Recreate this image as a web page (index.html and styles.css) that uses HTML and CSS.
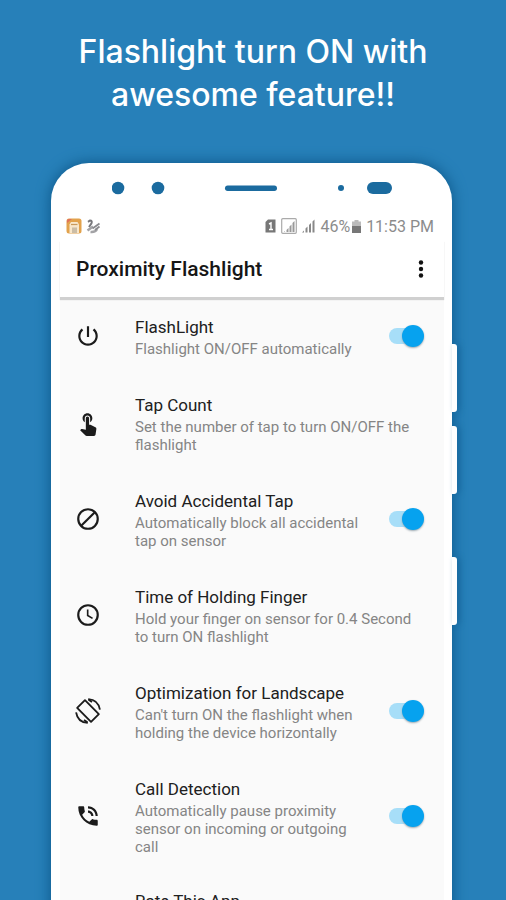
FILE: index.html
```html
<!DOCTYPE html>
<html lang="en">
<head>
<meta charset="utf-8">
<meta name="viewport" content="width=device-width, initial-scale=1">
<title>Proximity Flashlight</title>
<link rel="stylesheet" href="styles.css">
</head>
<body>
<h1 class="headline">Flashlight turn ON with<br>awesome feature!!</h1>
<main class="phone">
  <span class="key key-up"></span>
  <span class="key key-down"></span>
  <span class="key key-power"></span>
  <div class="sensors">
    <svg width="280" height="14" viewBox="0 0 280 14" fill="#1b6b9f" aria-hidden="true">
      <circle cx="6" cy="7" r="6.3"/><circle cx="46" cy="7" r="6.3"/>
      <rect x="113" y="4.500" width="52" height="5.500" rx="2.700"/>
      <circle cx="229" cy="7" r="3"/><rect x="255" y="1" width="25" height="12" rx="6"/>
    </svg>
  </div>
  <div class="screen">
    <div class="status">
      <svg width="16" height="16" viewBox="0 0 16 16" aria-hidden="true">
        <rect x=".5" y=".5" width="15" height="15" rx="2.500" fill="#e2a24c"/>
        <path d="M1 5V3q0-2 2-2h3z" fill="#e0705c"/>
        <path d="M3.500 15V6.500L5 4h6.500l1.500 2.500V15z" fill="#f8e7cb"/>
        <path d="M5 6.500h6.500" stroke="#c99a5c" stroke-width="1.200" fill="none"/>
        <path d="M6 9.500h5V15H6z" fill="#cbbda6"/>
      </svg>
      <svg width="15" height="15" viewBox="0 0 15 15" fill="none" stroke="#77777b" aria-hidden="true">
        <path d="M2 2.800L4 1.500q2.500 0 1.500 2.700L3 8" stroke-width="2"/>
        <path d="M1.500 11.500L7 7.500M4.500 13q5 .5 6.500-3" stroke-width="2.500" stroke="#a3a3a6"/>
        <path d="M6.500 9.500L13.500 4.500M9 11l4.500-3.500" stroke-width="1.800" stroke="#8a8a8e"/>
      </svg>
      <div class="status-right">
        <svg width="11" height="14" viewBox="0 0 11 14" aria-hidden="true"><path d="M3 .5h7.500v13H.5V3z" fill="#777"/><path d="M4 5l2-1v6.500M4 10.500h4" stroke="#fff" stroke-width="1.400" fill="none"/></svg>
        <svg width="16" height="16" viewBox="0 0 16 16" aria-hidden="true"><rect x=".7" y=".7" width="14.600" height="14.600" rx="1" fill="none" stroke="#aaa" stroke-width="1.200"/><path d="M3 14l1-1v1zM5.500 14v-2l2-2v4zM8.500 14V8.500l2-2V14zM11.500 14V5l2-2v11z" fill="#999"/></svg>
        <svg width="13" height="14" viewBox="0 0 13 14" fill="#888" aria-hidden="true"><path d="M0 13.500l2-2v2zM3.500 13.500v-4l2-2v6zM7 13.500V6l2-2v9.500zM10.500 13.500v-11l2-2v13z"/></svg>
        <span class="battery">46%<svg width="9" height="13" viewBox="0 0 9 13" aria-hidden="true"><path d="M2.500 0h4v1.500H9V6H0V1.500h2.500z" fill="#bbb"/><path d="M0 6h9v7H0z" fill="#777"/></svg></span>
        <span>11:53 PM</span>
      </div>
    </div>
    <header class="appbar">
      <h2 class="title">Proximity Flashlight</h2>
      <button class="more" type="button" aria-label="More options">
        <svg width="6" height="18" viewBox="0 0 6 18" fill="#111"><circle cx="3" cy="2.500" r="2.200"/><circle cx="3" cy="9" r="2.200"/><circle cx="3" cy="15.500" r="2.200"/></svg>
      </button>
    </header>
    <ul class="settings">
      <li class="row">
        <svg class="icon" viewBox="0 0 24 24" aria-hidden="true"><path d="M13 3h-2v10h2V3zm4.830 2.170l-1.420 1.420C17.990 7.860 19 9.810 19 12c0 3.870-3.130 7-7 7s-7-3.130-7-7c0-2.190 1.010-4.140 2.580-5.420L6.170 5.170C4.230 6.820 3 9.260 3 12c0 4.970 4.030 9 9 9s9-4.030 9-9c0-2.740-1.230-5.180-3.170-6.830z"/></svg>
        <label class="text" for="flash"><span class="name">FlashLight</span><span class="desc">Flashlight ON/OFF automatically</span></label>
        <input class="switch" id="flash" type="checkbox" role="switch" checked>
      </li>
      <li class="row">
        <svg class="icon" viewBox="0 0 24 24" aria-hidden="true"><path d="M9 11.240V7.500C9 6.120 10.120 5 11.500 5S14 6.120 14 7.500v3.740c1.210-.81 2-2.180 2-3.740C16 5.010 13.990 3 11.500 3S7 5.010 7 7.500c0 1.560.79 2.930 2 3.740zm9.840 4.630l-4.540-2.260c-.17-.07-.35-.11-.54-.11H13v-6c0-.83-.67-1.500-1.500-1.500S10 6.670 10 7.500v10.740l-3.430-.72c-.08-.01-.15-.03-.24-.03-.31 0-.59.13-.79.33l-.79.800 4.940 4.940c.27.270.65.440 1.060.440h6.790c.75 0 1.330-.55 1.440-1.280l.75-5.270c.01-.07.02-.14.020-.2 0-.62-.38-1.160-.91-1.380z"/></svg>
        <div class="text"><span class="name">Tap Count</span><span class="desc">Set the number of tap to turn ON/OFF the flashlight</span></div>
      </li>
      <li class="row">
        <svg class="icon" viewBox="0 0 24 24" aria-hidden="true"><g fill="none" stroke="#1b1b1b" stroke-width="2"><circle cx="12" cy="12" r="9"/><path d="M5.700 18.300L18.300 5.700"/></g></svg>
        <label class="text" for="avoid"><span class="name">Avoid Accidental Tap</span><span class="desc">Automatically block all accidental tap on sensor</span></label>
        <input class="switch" id="avoid" type="checkbox" role="switch" checked>
      </li>
      <li class="row">
        <svg class="icon" viewBox="0 0 24 24" aria-hidden="true"><g fill="none" stroke="#1b1b1b"><circle cx="12" cy="12" r="9" stroke-width="2"/><path d="M11.700 7v5.400l4.500 2.700" stroke-width="1.500"/></g></svg>
        <div class="text"><span class="name">Time of Holding Finger</span><span class="desc">Hold your finger on sensor for 0.4 Second to turn ON flashlight</span></div>
      </li>
      <li class="row">
        <svg class="icon" viewBox="0 0 24 24" aria-hidden="true"><g fill="none" stroke="#1b1b1b" stroke-width="1.700" stroke-linejoin="round"><path d="M9.200 2L2 9.200 14.800 22 22 14.800z"/><path d="M12.200 1Q21.500 1.500 23 10.800M11.800 23Q2.500 22.500 1 13.200"/><path d="M12.500 1.500l3.200 2.200M11.500 22.500l-3.200-2.200"/></g></svg>
        <label class="text" for="land"><span class="name">Optimization for Landscape</span><span class="desc">Can't turn ON the flashlight when holding the device horizontally</span></label>
        <input class="switch" id="land" type="checkbox" role="switch" checked>
      </li>
      <li class="row">
        <svg class="icon" viewBox="0 0 24 24" aria-hidden="true"><path d="M20 15.500c-1.250 0-2.450-.2-3.570-.57-.35-.11-.74-.03-1.020.24l-2.200 2.200c-2.830-1.440-5.150-3.750-6.590-6.590l2.200-2.210c.28-.26.360-.65.250-1C8.700 6.450 8.500 5.250 8.500 4c0-.55-.45-1-1-1H4c-.55 0-1 .45-1 1 0 9.390 7.610 17 17 17 .55 0 1-.45 1-1v-3.500c0-.55-.45-1-1-1zM19 12h2c0-4.970-4.030-9-9-9v2c3.870 0 7 3.130 7 7zm-4 0h2c0-2.760-2.240-5-5-5v2c1.660 0 3 1.340 3 3z"/></svg>
        <label class="text" for="call"><span class="name">Call Detection</span><span class="desc">Automatically pause proximity sensor on incoming or outgoing call</span></label>
        <input class="switch" id="call" type="checkbox" role="switch" checked>
      </li>
      <li class="row">
        <span class="icon"></span>
        <div class="text"><span class="name">Rate This App</span></div>
      </li>
    </ul>
  </div>
</main>
</body>
</html>
```
FILE: styles.css
```css
* { box-sizing: border-box; }

body {
  margin: 0;
  height: 100vh;
  overflow: hidden;
  background: #2780b9;
  font-family: Roboto, "Liberation Sans", sans-serif;
}

.headline {
  margin: 0;
  padding: 30px 16px 47px;
  color: #fff;
  font: 500 32px/43px Inter, "Open Sans", sans-serif;
  text-align: center;
}

.phone {
  position: relative;
  margin: 0 54px 0 51px;
  padding: 0 8px 0 9px;
  border-radius: 38px 38px 0 0;
  background: #fff;
  box-shadow: 0 0 14px 1px #0f5a8c;
}

.key {
  position: absolute;
  left: 100%;
  width: 5px;
  height: 68px;
  border-radius: 0 3px 3px 0;
  background: #fff;
  box-shadow: 3px 0 6px -1px #145f92;
}
.key-up { top: 181px; }
.key-down { top: 263px; }
.key-power { top: 394px; }

.sensors {
  display: flex;
  align-items: center;
  justify-content: center;
  height: 50px;
}

.status {
  display: flex;
  align-items: center;
  gap: 4px;
  height: 26px;
  padding: 0 10px 0 6px;
  color: #8c8c8c;
  font-size: 16px;
}
.status-right {
  display: flex;
  align-items: center;
  gap: 5px;
  margin-left: auto;
}
.battery {
  display: flex;
  align-items: center;
  gap: 2px;
}

.appbar {
  position: relative;
  display: flex;
  align-items: center;
  justify-content: space-between;
  height: 58px;
  padding: 2px 16px 0;
  box-shadow: 0 3px 1px #d0d0d0;
}
.title {
  margin: 0;
  color: #161616;
  font-size: 21px;
  font-weight: 500;
}
.more {
  display: flex;
  justify-content: center;
  width: 14px;
  padding: 0;
  border: 0;
  background: none;
}

.settings {
  margin: 0;
  padding: 0;
  list-style: none;
  background: #fafafa;
}
.row {
  display: flex;
  align-items: center;
  padding: 17px 20px 17px 15px;
}
.row:last-child { padding-top: 15px; }
.icon {
  flex: none;
  width: 26px;
  height: 26px;
  margin-right: 34px;
  fill: #1b1b1b;
}
.text { flex: 1; }
.name, .desc { display: block; }
.name {
  color: #202020;
  font-size: 17px;
  line-height: 26px;
}
.desc {
  color: #858585;
  font-size: 15px;
  line-height: 18px;
}

.switch {
  appearance: none;
  position: relative;
  flex: none;
  width: 35px;
  height: 22px;
  margin: 0 0 0 20px;
}
.switch::before {
  content: "";
  position: absolute;
  inset: 3px 9px 3px 0;
  border-radius: 8px;
  background: #a7def8;
}
.switch::after {
  content: "";
  position: absolute;
  top: 0;
  right: 0;
  width: 22px;
  height: 22px;
  border-radius: 50%;
  background: #06a2ef;
  box-shadow: 0 1px 2px #9aa8b0;
}
.switch:not(:checked)::before { background: #ccc; }
.switch:not(:checked)::after { right: 13px; background: #f1f1f1; }
```
